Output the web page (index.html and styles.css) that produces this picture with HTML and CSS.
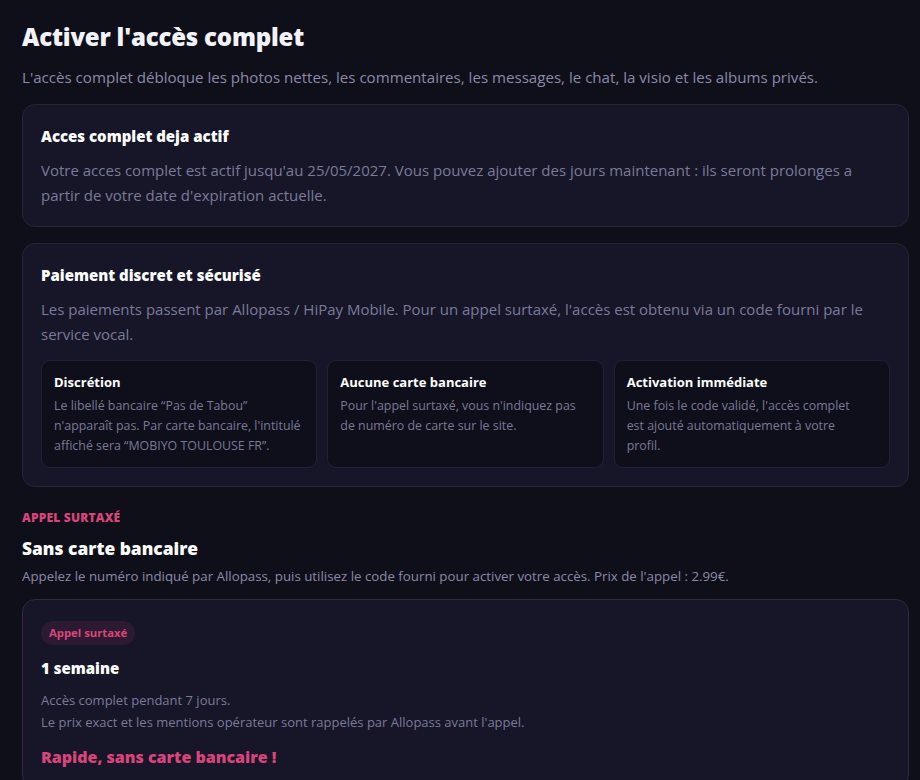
FILE: index.html
```html
<!DOCTYPE html>
<html lang="fr">
  <head>
    <meta charset="UTF-8" />
    <meta name="viewport" content="width=device-width, initial-scale=1.0" />
    <title>Activer l'accès complet</title>
    <link rel="stylesheet" href="styles.css">
  </head>
  <body>
    <main class="page">
      <h1 class="page-title">Activer l'accès complet</h1>
      <p class="page-lead">L'accès complet débloque les photos nettes, les commentaires, les messages, le chat, la visio et les albums privés.</p>

      <!-- Already active -->
      <section class="card">
        <h2 class="card-title">Acces complet deja actif</h2>
        <p class="card-text">Votre acces complet est actif jusqu'au 25/05/2027. Vous pouvez ajouter des jours maintenant : ils seront prolonges a partir de votre date d'expiration actuelle.</p>
      </section>

      <!-- Discretion -->
      <section class="card">
        <h2 class="card-title">Paiement discret et sécurisé</h2>
        <p class="card-text">Les paiements passent par Allopass / HiPay Mobile. Pour un appel surtaxé, l'accès est obtenu via un code fourni par le service vocal.</p>
        <div class="features">
          <div class="feature">
            <h3>Discrétion</h3>
            <p>Le libellé bancaire “Pas de Tabou” n'apparaît&nbsp;pas. Par carte bancaire, l'intitulé affiché sera “MOBIYO TOULOUSE FR”.</p>
          </div>
          <div class="feature">
            <h3>Aucune carte bancaire</h3>
            <p>Pour l'appel surtaxé, vous n'indiquez pas de numéro de carte sur le site.</p>
          </div>
          <div class="feature">
            <h3>Activation immédiate</h3>
            <p>Une fois le code validé, l'accès complet<br>est ajouté automatiquement à votre<br>profil.</p>
          </div>
        </div>
      </section>

      <!-- Premium call -->
      <section class="offer-section">
        <div class="eyebrow">Appel surtaxé</div>
        <h2 class="section-title">Sans carte bancaire</h2>
        <p class="section-lead">Appelez le numéro indiqué par Allopass, puis utilisez le code fourni pour activer votre accès. Prix de l'appel : 2.99€.</p>

        <div class="card offer">
          <span class="badge">Appel surtaxé</span>
          <h3 class="offer-title">1 semaine</h3>
          <p class="offer-text">Accès complet pendant 7 jours.<br>Le prix exact et les mentions opérateur sont rappelés par Allopass avant l'appel.</p>
          <div class="offer-pitch">Rapide, sans carte bancaire !</div>
        </div>
      </section>
    </main>
  </body>
</html>
```

FILE: styles.css
```css
body {
  margin: 0;
  padding: 0;
  background-color: #0f0f1a;
  color: #f2f2fa;
  font-family: "Open Sans", "Noto Sans", Arial, sans-serif;
  overflow: hidden;
}

.page {
  padding: 18px 11px 0 22px;
}

.page-title {
  margin: 0;
  font-size: 24px;
  font-weight: 800;
  line-height: 38px;
  letter-spacing: -0.2px;
}

.page-lead {
  margin: 10px 0 16px;
  font-size: 15.1px;
  line-height: 22px;
  color: #8b8aa8;
}

.card {
  background-color: #161628;
  border: 1px solid #25253a;
  border-radius: 13px;
  padding: 20px 18px 18px;
  margin-bottom: 16px;
}

.card-title {
  margin: 0;
  font-size: 15px;
  font-weight: 800;
  line-height: 22px;
  color: #ffffff;
}

.card-text {
  margin: 11px 0 0;
  font-size: 15px;
  line-height: 25px;
  color: #7b7a99;
}

.features {
  display: grid;
  grid-template-columns: 1fr 1fr 1fr;
  gap: 10px;
  margin-top: 13px;
}

.feature {
  background-color: #0f0f1b;
  border: 1px solid #20203a;
  border-radius: 9px;
  padding: 12px 11px 10px 12px;
  min-height: 84px;
}

.feature h3 {
  margin: 0 0 5px;
  font-size: 13px;
  font-weight: 700;
  line-height: 18px;
  color: #ffffff;
}

.feature p {
  margin: 0;
  font-size: 12.4px;
  line-height: 20px;
  color: #7a7996;
}

.offer-section {
  padding-top: 7px;
}

.eyebrow {
  font-size: 12px;
  font-weight: 800;
  letter-spacing: 0.2px;
  text-transform: uppercase;
  color: #d9457a;
  line-height: 16px;
}

.section-title {
  margin: 10px 0 0;
  font-size: 17.4px;
  font-weight: 800;
  line-height: 24px;
  color: #ffffff;
}

.section-lead {
  margin: 7px 0 14px;
  font-size: 13.3px;
  line-height: 18px;
  color: #8b8aa8;
}

.offer {
  border-color: #33283f;
  padding-top: 20px;
}

.badge {
  display: inline-block;
  padding: 4px 8px;
  border-radius: 12px;
  background-color: #2c1a33;
  color: #d9457a;
  font-size: 11.3px;
  font-weight: 700;
  line-height: 16px;
}

.offer-title {
  margin: 12px 0 0;
  font-size: 15px;
  font-weight: 800;
  line-height: 22px;
  color: #ffffff;
}

.offer-text {
  margin: 10px 0 0;
  font-size: 13px;
  line-height: 22px;
  color: #7b7a99;
}

.offer-pitch {
  margin-top: 12px;
  font-size: 16px;
  font-weight: 800;
  line-height: 24px;
  color: #d9457a;
}
```
